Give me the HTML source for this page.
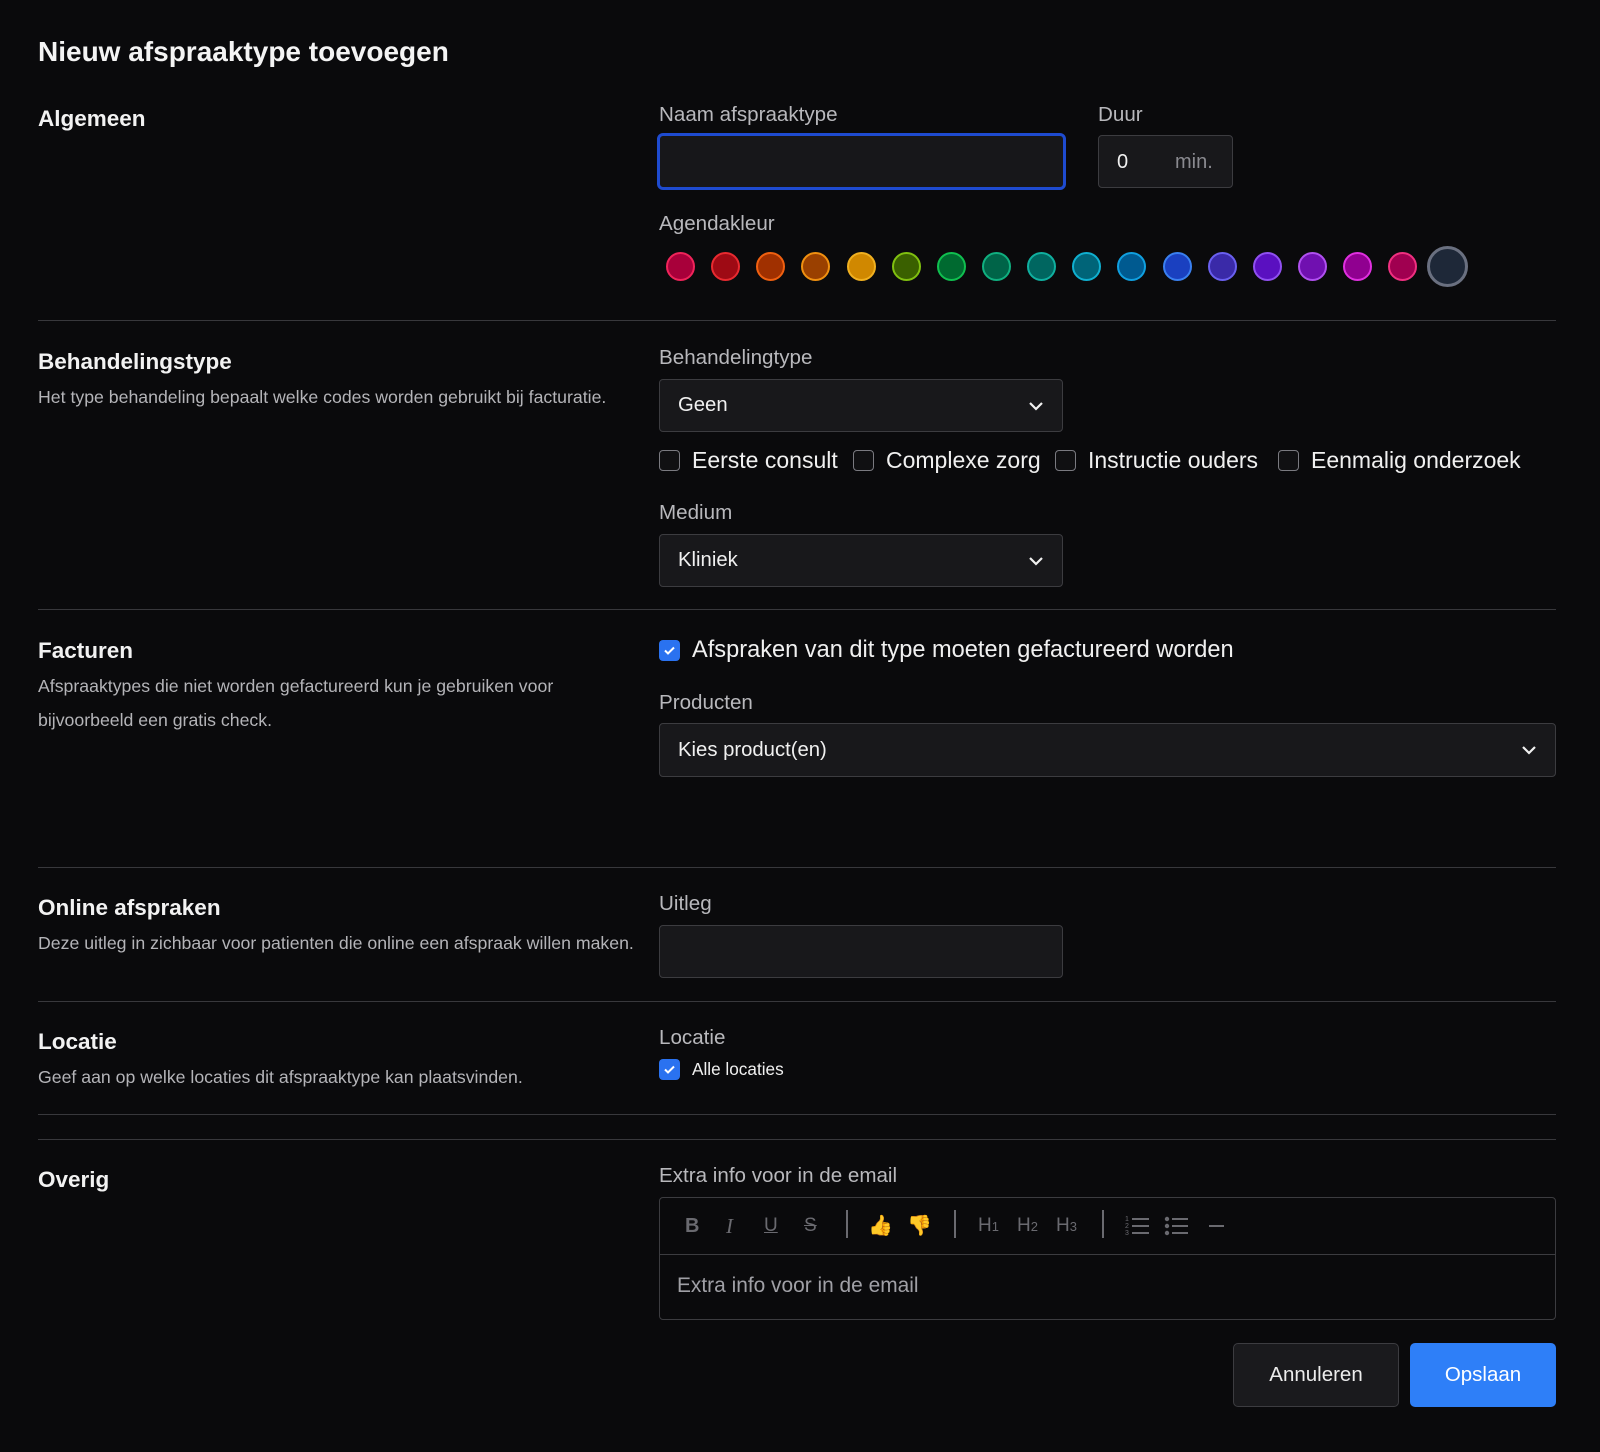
<!DOCTYPE html>
<html><head><meta charset="utf-8">
<style>
*{box-sizing:border-box;margin:0;padding:0}
html,body{width:1600px;height:1452px;background:#0a0a0c;overflow:hidden}
body{font-family:"Liberation Sans",Arial,sans-serif;color:#ececee;position:relative}
.a{position:absolute;white-space:nowrap}
.h{font-size:22.5px;font-weight:bold;color:#f2f2f2}
.d{font-size:17.7px;color:#b4b4b8}
.l{font-size:20.6px;color:#b8b8bc}
.box{position:absolute;background:#18181b;border:1px solid #3c3c40;border-radius:4px}
.sel{font-size:20.3px;color:#f0f0f0;padding-left:18px;display:flex;align-items:center}
.chev{position:absolute;right:18px;top:50%;margin-top:-5px}
.hr{position:absolute;left:38px;width:1518px;height:1px;background:#38383c}
.cb{position:absolute;width:21px;height:21px;border:1.5px solid #7a7a80;border-radius:4px;background:#101012}
.cbc{position:absolute;width:21px;height:21px;border-radius:4px;background:#2a72f0}
.t22{font-size:23px;color:#f0f0f0}
.dot{position:absolute;width:29px;height:29px;border-radius:50%;border:2.5px solid}
.tb{position:absolute;font-size:19px;color:#6a6a70;top:1212px;height:28px;line-height:28px}
.sep{position:absolute;top:1210px;width:2px;height:28px;background:#6a6a70}
</style></head><body>
<div class="a" style="left:38px;top:35px;font-size:28px;font-weight:bold;line-height:34px;color:#f4f4f4">Nieuw afspraaktype toevoegen</div>

<div class="a h" style="left:38px;top:106px;line-height:26px">Algemeen</div>
<div class="a l" style="left:659px;top:103px;line-height:24px">Naam afspraaktype</div>
<div class="box" style="left:657px;top:133px;width:409px;height:57px;border:3px solid #1e4bd0;border-radius:6px;background:#17171a"></div>
<div class="a l" style="left:1098px;top:103px;line-height:24px">Duur</div>
<div class="box" style="left:1098px;top:135px;width:135px;height:53px"></div>
<div class="a" style="left:1117px;top:150px;font-size:20px;line-height:24px;color:#f0f0f0">0</div>
<div class="a" style="left:1175px;top:150px;font-size:20px;line-height:24px;color:#8a8a90">min.</div>
<div class="a l" style="left:659px;top:212px;line-height:24px">Agendakleur</div>

<div class="dot" style="left:666px;top:252px;background:#a8003a;border-color:#f0245a"></div>
<div class="dot" style="left:711px;top:252px;background:#9e0a14;border-color:#e82a30"></div>
<div class="dot" style="left:756px;top:252px;background:#a03000;border-color:#f06010"></div>
<div class="dot" style="left:801px;top:252px;background:#9a4000;border-color:#f09010"></div>
<div class="dot" style="left:847px;top:252px;background:#d08800;border-color:#f0b020"></div>
<div class="dot" style="left:892px;top:252px;background:#3a6000;border-color:#80c010"></div>
<div class="dot" style="left:937px;top:252px;background:#006a30;border-color:#10c050"></div>
<div class="dot" style="left:982px;top:252px;background:#006448;border-color:#10b080"></div>
<div class="dot" style="left:1027px;top:252px;background:#006660;border-color:#10b0a0"></div>
<div class="dot" style="left:1072px;top:252px;background:#006478;border-color:#10b0d0"></div>
<div class="dot" style="left:1117px;top:252px;background:#005a90;border-color:#10a0e0"></div>
<div class="dot" style="left:1163px;top:252px;background:#1a40c0;border-color:#3a80f0"></div>
<div class="dot" style="left:1208px;top:252px;background:#3a2aa8;border-color:#6a60f0"></div>
<div class="dot" style="left:1253px;top:252px;background:#5a10c0;border-color:#9050f0"></div>
<div class="dot" style="left:1298px;top:252px;background:#7010b0;border-color:#b050f0"></div>
<div class="dot" style="left:1343px;top:252px;background:#900090;border-color:#e030e0"></div>
<div class="dot" style="left:1388px;top:252px;background:#a00050;border-color:#f03080"></div>
<div class="dot" style="left:1427px;top:246px;width:41px;height:41px;border-width:3.5px;background:#1e2838;border-color:#6a7080"></div>

<div class="hr" style="top:320px"></div>

<div class="a h" style="left:38px;top:349px;line-height:26px">Behandelingstype</div>
<div class="a d" style="left:38px;top:387px;line-height:20px">Het type behandeling bepaalt welke codes worden gebruikt bij facturatie.</div>
<div class="a l" style="left:659px;top:346px;line-height:24px">Behandelingtype</div>
<div class="box sel" style="left:659px;top:379px;width:404px;height:53px">Geen<svg class="chev" width="16" height="10" viewBox="0 0 16 10"><path d="M2 2l6 6 6-6" stroke="#f0f0f0" stroke-width="2.2" fill="none"/></svg></div>

<div class="cb" style="left:659px;top:450px"></div>
<div class="a t22" style="left:692px;top:446px;line-height:28px">Eerste consult</div>
<div class="cb" style="left:853px;top:450px"></div>
<div class="a t22" style="left:886px;top:446px;line-height:28px">Complexe zorg</div>
<div class="cb" style="left:1055px;top:450px"></div>
<div class="a t22" style="left:1088px;top:446px;line-height:28px">Instructie ouders</div>
<div class="cb" style="left:1278px;top:450px"></div>
<div class="a t22" style="left:1311px;top:446px;line-height:28px">Eenmalig onderzoek</div>

<div class="a l" style="left:659px;top:501px;line-height:24px">Medium</div>
<div class="box sel" style="left:659px;top:534px;width:404px;height:53px">Kliniek<svg class="chev" width="16" height="10" viewBox="0 0 16 10"><path d="M2 2l6 6 6-6" stroke="#f0f0f0" stroke-width="2.2" fill="none"/></svg></div>

<div class="hr" style="top:609px"></div>

<div class="a h" style="left:38px;top:638px;line-height:26px">Facturen</div>
<div class="a d" style="left:38px;top:676px;line-height:20px">Afspraaktypes die niet worden gefactureerd kun je gebruiken voor</div>
<div class="a d" style="left:38px;top:710px;line-height:20px">bijvoorbeeld een gratis check.</div>
<div class="cbc" style="left:659px;top:640px"><svg width="21" height="21" viewBox="0 0 21 21"><path d="M6 10.5l3 3 6-6" stroke="#fff" stroke-width="2" fill="none"/></svg></div>
<div class="a" style="left:692px;top:636px;line-height:28px;font-size:23.6px;color:#f0f0f0">Afspraken van dit type moeten gefactureerd worden</div>
<div class="a l" style="left:659px;top:691px;line-height:24px">Producten</div>
<div class="box sel" style="left:659px;top:723px;width:897px;height:54px">Kies product(en)<svg class="chev" width="16" height="10" viewBox="0 0 16 10"><path d="M2 2l6 6 6-6" stroke="#f0f0f0" stroke-width="2.2" fill="none"/></svg></div>

<div class="hr" style="top:867px"></div>

<div class="a h" style="left:38px;top:895px;line-height:26px">Online afspraken</div>
<div class="a d" style="left:38px;top:933px;line-height:20px">Deze uitleg in zichbaar voor patienten die online een afspraak willen maken.</div>
<div class="a l" style="left:659px;top:892px;line-height:24px">Uitleg</div>
<div class="box" style="left:659px;top:925px;width:404px;height:53px"></div>

<div class="hr" style="top:1001px"></div>

<div class="a h" style="left:38px;top:1029px;line-height:26px">Locatie</div>
<div class="a d" style="left:38px;top:1067px;line-height:20px">Geef aan op welke locaties dit afspraaktype kan plaatsvinden.</div>
<div class="a l" style="left:659px;top:1026px;line-height:24px">Locatie</div>
<div class="cbc" style="left:659px;top:1059px"><svg width="21" height="21" viewBox="0 0 21 21"><path d="M6 10.5l3 3 6-6" stroke="#fff" stroke-width="2" fill="none"/></svg></div>
<div class="a" style="left:692px;top:1058px;font-size:17.2px;line-height:22px;color:#f0f0f0">Alle locaties</div>

<div class="hr" style="top:1114px"></div>
<div class="hr" style="top:1139px"></div>

<div class="a h" style="left:38px;top:1167px;line-height:26px">Overig</div>
<div class="a l" style="left:659px;top:1164px;line-height:24px">Extra info voor in de email</div>
<div class="box" style="left:659px;top:1197px;width:897px;height:123px;background:#0a0a0c"></div>
<div class="a" style="left:660px;top:1254px;width:895px;height:1px;background:#3c3c40"></div>
<div class="tb" style="left:685px;font-weight:bold;font-size:20px">B</div>
<div class="tb" style="left:726px;font-style:italic;font-family:'Liberation Serif',serif;font-size:21px">I</div>
<div class="tb" style="left:764px;text-decoration:underline">U</div>
<div class="tb" style="left:804px;text-decoration:line-through">S</div>
<div class="sep" style="left:846px"></div>
<div class="tb" style="left:868px;font-size:20px;color:#e0a020">👍</div>
<div class="tb" style="left:907px;font-size:20px;color:#e0a020">👎</div>
<div class="sep" style="left:954px"></div>
<div class="tb" style="left:978px">H<span style="font-size:13px">1</span></div>
<div class="tb" style="left:1017px">H<span style="font-size:13px">2</span></div>
<div class="tb" style="left:1056px">H<span style="font-size:13px">3</span></div>
<div class="sep" style="left:1102px"></div>
<svg class="a" style="left:1125px;top:1215px" width="26" height="22" viewBox="0 0 26 22"><g fill="#6a6a70" font-size="7" font-family="Liberation Sans"><text x="0" y="6">1</text><text x="0" y="13">2</text><text x="0" y="20">3</text></g><g stroke="#6a6a70" stroke-width="2"><path d="M7 4h17M7 11h17M7 18h17"/></g></svg>
<svg class="a" style="left:1164px;top:1215px" width="26" height="22" viewBox="0 0 26 22"><g fill="#6a6a70"><circle cx="3" cy="4" r="2.2"/><circle cx="3" cy="11" r="2.2"/><circle cx="3" cy="18" r="2.2"/></g><g stroke="#6a6a70" stroke-width="2"><path d="M8 4h16M8 11h16M8 18h16"/></g></svg>
<div class="a" style="left:1209px;top:1225px;width:15px;height:2px;background:#6a6a70"></div>
<div class="a" style="left:677px;top:1274px;font-size:20.9px;line-height:24px;color:#a0a0a6">Extra info voor in de email</div>

<div class="a" style="left:1233px;top:1343px;width:166px;height:64px;background:#1a1a1d;border:1px solid #3c3c40;border-radius:5px;font-size:20.5px;line-height:62px;text-align:center;color:#ececec">Annuleren</div>
<div class="a" style="left:1410px;top:1343px;width:146px;height:64px;background:#2e7ff8;border-radius:5px;font-size:20.5px;line-height:64px;text-align:center;color:#fff">Opslaan</div>
</body></html>
